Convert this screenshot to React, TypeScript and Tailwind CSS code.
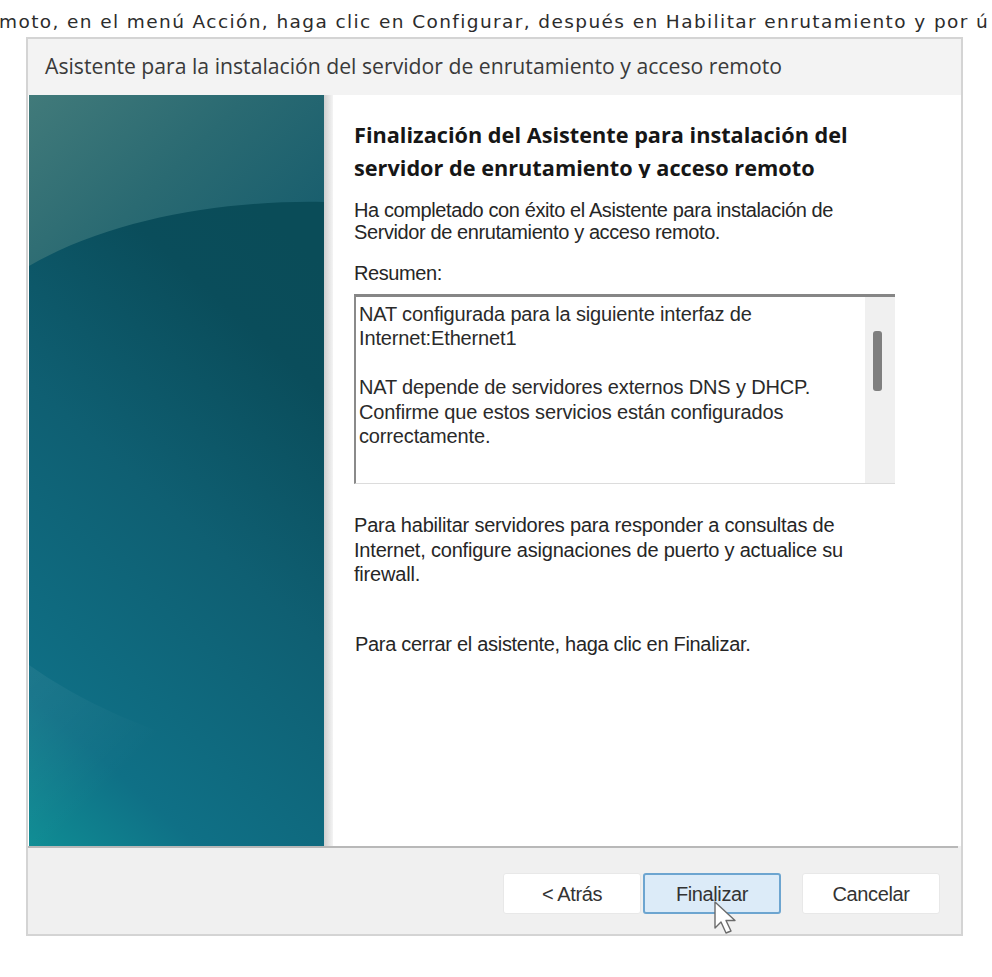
export default function App() {
  const sans = "font-['Liberation_Sans',Arial,sans-serif]";
  return (
    <div className={`w-[992px] h-[977px] bg-white overflow-hidden ${sans}`}>
      <div className="h-[37px] pt-[11px] -ml-[1px] whitespace-nowrap overflow-hidden font-['DejaVu_Sans',sans-serif] text-[18.5px] leading-[22px] tracking-[1.4px] text-[#2c2c2c]">
        moto, en el menú Acción, haga clic en Configurar, después en Habilitar enrutamiento y por ú
      </div>
      <div className="ml-[26px] w-[937px] h-[899px] border-2 border-[#d4d4d4] bg-[#f0f0f0] flex flex-col">
        <div className="h-[56px] shrink-0 bg-[#f3f3f3] pl-[17px] pt-[13px] font-['Open_Sans',sans-serif] text-[21.2px] leading-[28px] text-[#3a3a3a]">
          Asistente para la instalación del servidor de enrutamiento y acceso remoto
        </div>
        <div className="h-[751px] shrink-0 flex bg-white">
          <div className="w-[295px] ml-px shrink-0">
            <svg width="295" height="751" viewBox="0 0 295 751" className="block">
              <defs>
                <linearGradient id="base" x1="0" y1="1" x2="0.35" y2="0">
                  <stop offset="0" stopColor="#0f8d94" />
                  <stop offset="0.18" stopColor="#0f7086" />
                  <stop offset="0.55" stopColor="#0f5f72" />
                  <stop offset="0.85" stopColor="#0a4d5b" />
                  <stop offset="1" stopColor="#0a4c58" />
                </linearGradient>
                <linearGradient id="shine" x1="0" y1="0" x2="1" y2="0.6">
                  <stop offset="0" stopColor="#417a7a" />
                  <stop offset="0.55" stopColor="#2a6a72" />
                  <stop offset="1" stopColor="#1a5f6e" />
                </linearGradient>
                <linearGradient id="low" x1="0" y1="0" x2="1" y2="0.6">
                  <stop offset="0" stopColor="#ffffff" stopOpacity="0.06" />
                  <stop offset="0.5" stopColor="#ffffff" stopOpacity="0" />
                </linearGradient>
              </defs>
              <rect width="295" height="751" fill="url(#base)" />
              <path d="M0 0H295V107C190 105 80 125 0 171Z" fill="url(#shine)" />
              <path d="M0 570C60 612 140 650 295 680V751H0Z" fill="url(#low)" />
            </svg>
          </div>
          <div className="w-[9px] shrink-0 bg-gradient-to-r from-[#cfcfcf] to-[#f4f4f4]" />
          <div className="flex-1 pl-[21px] text-[20px] tracking-[-0.4px] text-[#262626]">
            <div className="mt-[23px] h-[60px] overflow-hidden font-['Open_Sans',sans-serif] font-bold text-[21.7px] leading-[33px] tracking-normal text-[#161616]">
              Finalización del Asistente para instalación del
              <br />
              servidor de enrutamiento y acceso remoto
            </div>
            <p className="mt-[21px] leading-[22px]">
              Ha completado con éxito el Asistente para instalación de
              <br />
              Servidor de enrutamiento y acceso remoto.
            </p>
            <p className="mt-[19px] leading-[22px]">Resumen:</p>
            <div className="mt-[10px] w-[541px] h-[190px] border-l-2 border-t-[3px] border-l-[#8a8a8a] border-t-[#868686] border-b border-b-[#dcdcdc] flex bg-white">
              <div className="flex-1 pl-[3px] pt-[5px] leading-[24.4px] tracking-[-0.15px] text-[#2a2a2a]">
                NAT configurada para la siguiente interfaz de
                <br />
                Internet:Ethernet1
                <br />
                <br />
                NAT depende de servidores externos DNS y DHCP.
                <br />
                Confirme que estos servicios están configurados
                <br />
                correctamente.
              </div>
              <div className="w-[30px] shrink-0 bg-[#f0f0f0] pl-[8px] pt-[34px]">
                <div className="w-[9px] h-[60px] rounded-[3px] bg-[#7f7f7f]" />
              </div>
            </div>
            <p className="mt-[29px] leading-[24.5px] tracking-[-0.2px]">
              Para habilitar servidores para responder a consultas de
              <br />
              Internet, configure asignaciones de puerto y actualice su
              <br />
              firewall.
            </p>
            <p className="mt-[45px] ml-px leading-[24px] tracking-[-0.3px]">Para cerrar el asistente, haga clic en Finalizar.</p>
          </div>
        </div>
        <div className="flex-1 relative flex justify-end border-t-2 border-t-[#b8b8b8] mr-[3px] pr-[18px] pt-[25px] gap-[21px] text-[20px] tracking-[-0.4px] text-[#333]">
          <div className="flex gap-[2px]">
            <div className="w-[138px] h-[41px] rounded-[3px] bg-white border border-[#e8e8e8] flex items-center justify-center">&lt; Atrás</div>
            <div className="w-[138px] h-[41px] rounded-[3px] bg-[#dcebf8] border-2 border-[#6da5d0] flex items-center justify-center">Finalizar</div>
          </div>
          <div className="w-[138px] h-[41px] rounded-[3px] bg-white border border-[#e8e8e8] flex items-center justify-center">Cancelar</div>
          <svg width="28" height="36" viewBox="0 0 28 36" className="absolute left-[685px] top-[52px]">
            <path d="M2 2V28L8 22L13 33L18 31L13 20.5H22Z" fill="#ffffff" stroke="#6b6b6b" strokeWidth="1.4" strokeLinejoin="round" />
          </svg>
        </div>
      </div>
    </div>
  );
}
